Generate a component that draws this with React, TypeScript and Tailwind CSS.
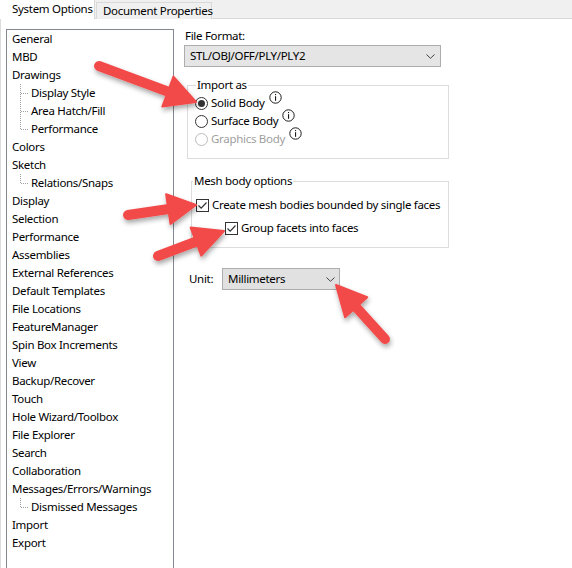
import React from "react";

type TreeItem = { label: string; child?: boolean; last?: boolean };

const tree: TreeItem[] = [
  { label: "General" },
  { label: "MBD" },
  { label: "Drawings" },
  { label: "Display Style", child: true },
  { label: "Area Hatch/Fill", child: true },
  { label: "Performance", child: true, last: true },
  { label: "Colors" },
  { label: "Sketch" },
  { label: "Relations/Snaps", child: true, last: true },
  { label: "Display" },
  { label: "Selection" },
  { label: "Performance" },
  { label: "Assemblies" },
  { label: "External References" },
  { label: "Default Templates" },
  { label: "File Locations" },
  { label: "FeatureManager" },
  { label: "Spin Box Increments" },
  { label: "View" },
  { label: "Backup/Recover" },
  { label: "Touch" },
  { label: "Hole Wizard/Toolbox" },
  { label: "File Explorer" },
  { label: "Search" },
  { label: "Collaboration" },
  { label: "Messages/Errors/Warnings" },
  { label: "Dismissed Messages", child: true, last: true },
  { label: "Import" },
  { label: "Export" },
];

function Connector({ last }: { last?: boolean }) {
  return (
    <svg width="19" height="18" className="shrink-0">
      <line x1="8.5" y1="0" x2="8.5" y2={last ? 9 : 18} stroke="#a0a0a0" strokeDasharray="1 1" />
      <line x1="9" y1="9.5" x2="17" y2="9.5" stroke="#a0a0a0" strokeDasharray="1 1" />
    </svg>
  );
}

function Info() {
  return (
    <svg width="13" height="13" viewBox="0 0 13 13" className="self-start -mt-[3px] ml-[1px] shrink-0">
      <circle cx="6.5" cy="6.5" r="5.7" fill="none" stroke="#1a1a1a" strokeWidth="1" />
      <rect x="6" y="3" width="1.1" height="1.1" fill="#1a1a1a" />
      <rect x="6" y="5.2" width="1.1" height="4.6" fill="#1a1a1a" />
    </svg>
  );
}

function Radio({ checked, disabled }: { checked?: boolean; disabled?: boolean }) {
  return (
    <span
      className={`w-[13px] h-[13px] rounded-full border flex items-center justify-center bg-white shrink-0 ${
        disabled ? "border-[#bcbcbc]" : "border-[#333]"
      }`}
    >
      {checked && <span className="w-[7px] h-[7px] rounded-full bg-[#333]" />}
    </span>
  );
}

function Check() {
  return (
    <span className="w-[13px] h-[13px] border border-[#333] bg-white flex items-center justify-center shrink-0">
      <svg width="11" height="11" viewBox="0 0 11 11">
        <path d="M1.5 5.5 L4.2 8.2 L9.5 2.5" fill="none" stroke="#333" strokeWidth="1.2" />
      </svg>
    </span>
  );
}

function Chevron() {
  return (
    <svg width="9" height="5" viewBox="0 0 9 5">
      <path d="M0.5 0.5 L4.5 4.3 L8.5 0.5" fill="none" stroke="#444" strokeWidth="1" />
    </svg>
  );
}

function Arrow({
  tail,
  tip,
  len = 30,
  half = 16,
  w = 10,
}: {
  tail: [number, number];
  tip: [number, number];
  len?: number;
  half?: number;
  w?: number;
}) {
  const dx = tip[0] - tail[0];
  const dy = tip[1] - tail[1];
  const d = Math.hypot(dx, dy);
  const ux = dx / d;
  const uy = dy / d;
  const px = -uy;
  const py = ux;
  const bx = tip[0] - ux * len;
  const by = tip[1] - uy * len;
  const pts = [
    [tip[0], tip[1]],
    [bx + px * half, by + py * half],
    [bx - px * half, by - py * half],
  ]
    .map((p) => p.join(","))
    .join(" ");
  return (
    <g filter="url(#shadow)">
      <line
        x1={tail[0]}
        y1={tail[1]}
        x2={bx + ux * 4}
        y2={by + uy * 4}
        stroke="#f24a4a"
        strokeWidth={w}
        strokeLinecap="round"
      />
      <polygon points={pts} fill="#f24a4a" strokeLinejoin="round" stroke="#f24a4a" strokeWidth="2" />
    </g>
  );
}

export default function App() {
  return (
    <div
      className="relative w-[572px] h-[568px] overflow-hidden bg-white text-[11.5px] tracking-[-0.3px] text-black whitespace-nowrap"
      style={{ fontFamily: '"Noto Sans", sans-serif' }}
    >
      {/* tabs */}
      <div className="flex h-[19px] bg-[#f0f0f0] border-b border-[#d9d9d9]">
        <div className="w-[95px] h-[19px] bg-white border-r border-[#d9d9d9] pl-[12px] leading-[18px]">
          System Options
        </div>
        <div className="mt-[2px] ml-[1px] h-[17px] w-[116px] border border-b-0 border-[#d9d9d9] bg-[#f0f0f0] pl-[6px] leading-[16px]">
          Document Properties
        </div>
      </div>

      <div className="flex h-[549px] border-l border-[#dcdcdc]">
        {/* tree */}
        <div className="ml-[5px] mt-[10px] w-[168px] border border-[#828790] border-b-0 pl-[5px]">
          {tree.map((t, i) => (
            <div key={i} className="flex h-[18px] items-center leading-[18px]">
              {t.child && <Connector last={t.last} />}
              <span>{t.label}</span>
            </div>
          ))}
        </div>

        {/* options */}
        <div className="ml-[10px] w-[270px] pt-[9px]">
          <div className="pl-[1px] leading-[16px]">File Format:</div>
          <div className="mt-[1px] h-[22px] w-[257px] border border-[#adadad] bg-[#e5e5e5] flex items-center justify-between pl-[5px] pr-[5px]">
            <span>STL/OBJ/OFF/PLY/PLY2</span>
            <Chevron />
          </div>

          <fieldset className="mt-[10px] ml-[3px] w-[262px] border border-[#dcdcdc] pl-[7px] pb-[10px]">
            <legend className="px-[1px] ml-[1px] leading-[16px]">Import as</legend>
            <div className="flex items-center h-[18px] gap-[3px] mt-[1px]">
              <Radio checked />
              <span>Solid Body</span>
              <Info />
            </div>
            <div className="flex items-center h-[18px] gap-[3px]">
              <Radio />
              <span>Surface Body</span>
              <Info />
            </div>
            <div className="flex items-center h-[18px] gap-[3px]">
              <Radio disabled />
              <span className="text-[#a0a0a0]">Graphics Body</span>
              <Info />
            </div>
          </fieldset>

          <fieldset className="mt-[14px] ml-[7px] w-[258px] border border-[#dcdcdc] pl-[4px] pb-[10px]">
            <legend className="px-[1px] ml-[-3px] leading-[16px]">Mesh body options</legend>
            <div className="flex items-center h-[18px] gap-[3px] mt-[7px]">
              <Check />
              <span>Create mesh bodies bounded by single faces</span>
            </div>
            <div className="flex items-center h-[18px] gap-[3px] mt-[5px] ml-[29px]">
              <Check />
              <span>Group facets into faces</span>
            </div>
          </fieldset>

          <div className="flex items-center mt-[20px] ml-[5px]">
            <span className="w-[33px]">Unit:</span>
            <div className="h-[22px] w-[118px] border border-[#adadad] bg-[#e1e1e1] flex items-center justify-between pl-[5px] pr-[4px]">
              <span>Millimeters</span>
              <Chevron />
            </div>
          </div>
        </div>
      </div>

      {/* annotation arrows */}
      <svg className="absolute inset-0 pointer-events-none" width="572" height="568">
        <defs>
          <filter id="shadow" x="-20%" y="-20%" width="140%" height="160%">
            <feDropShadow dx="1" dy="3" stdDeviation="2.5" floodColor="#000" floodOpacity="0.35" />
          </filter>
        </defs>
        <Arrow tail={[99, 66]} tip={[196, 102]} />
        <Arrow tail={[128, 215]} tip={[196, 205]} len={28} half={15} />
        <Arrow tail={[158, 256]} tip={[224, 231]} len={30} half={15} />
        <Arrow tail={[385, 339]} tip={[336, 285]} len={30} half={15} />
      </svg>
    </div>
  );
}
